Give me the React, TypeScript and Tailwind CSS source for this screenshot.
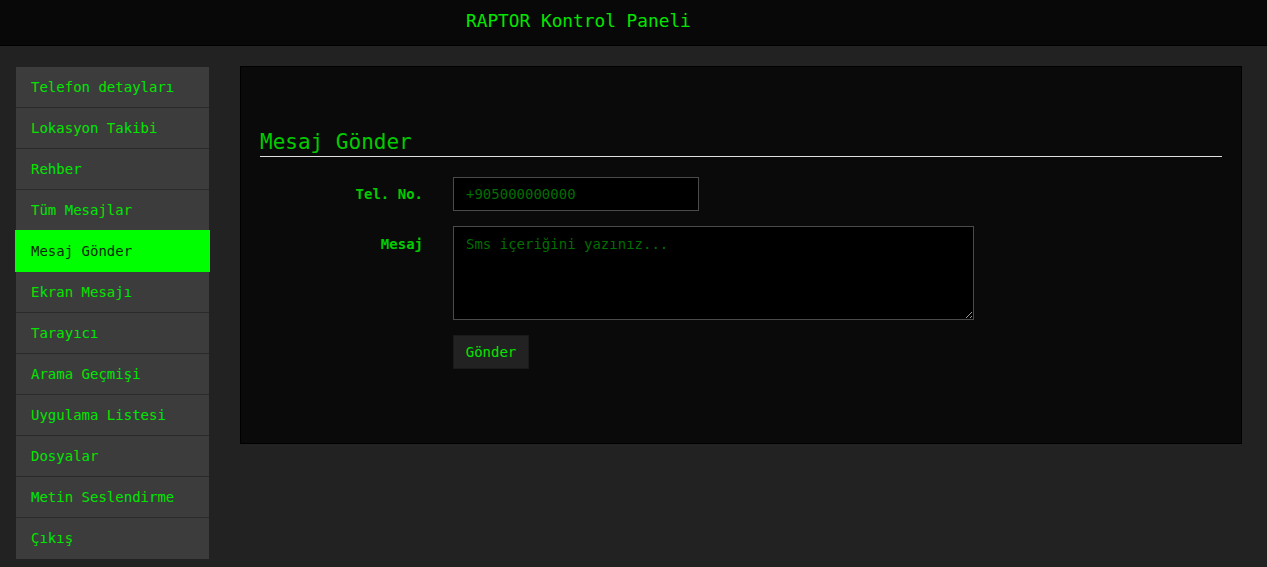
import React from 'react';

const menu = [
  'Telefon detayları',
  'Lokasyon Takibi',
  'Rehber',
  'Tüm Mesajlar',
  'Mesaj Gönder',
  'Ekran Mesajı',
  'Tarayıcı',
  'Arama Geçmişi',
  'Uygulama Listesi',
  'Dosyalar',
  'Metin Seslendirme',
  'Çıkış',
];

const App: React.FC = () => {
  return (
    <div className="min-h-screen bg-[#222222] font-['DejaVu_Sans_Mono',monospace] text-[#00e600]">
      <header className="h-[46px] bg-[#080808] border-b border-black flex items-center">
        <h1 className="pl-[466px] text-[17.8px] text-[#00e600] leading-none pb-[4px]">RAPTOR Kontrol Paneli</h1>
      </header>

      <div className="flex items-start pl-[16px] pr-[25px] pt-[20px] gap-[31px]">
        <nav className="w-[193px] shrink-0 flex flex-col mt-[1px]">
          {menu.map((item, i) => {
            const active = item === 'Mesaj Gönder';
            const last = i === menu.length - 1;
            return (
              <a
                key={item}
                href="#"
                className={
                  active
                    ? 'relative h-[42px] -mt-px -mx-px flex items-center pl-[16px] bg-[#00ff00] text-[#0a2a0a] text-[14px]'
                    : `h-[41px] flex items-center pl-[15px] bg-[#3c3c3c] text-[#00e600] text-[14px] ${last ? 'h-[40px]' : 'border-b border-[#2a2a2a]'}`
                }
              >
                {item}
              </a>
            );
          })}
        </nav>

        <main className="flex-1 bg-[#0a0a0a] border border-black h-[378px] px-[19px] pt-[63px]">
          <h2 className="text-[21px] text-[#00cc00] leading-[25px] pb-px border-b border-[#e0e0e0]">Mesaj Gönder</h2>

          <form className="mt-[20px] flex flex-col gap-[15px]" onSubmit={(e) => e.preventDefault()}>
            <div className="flex items-center gap-[30px]">
              <label className="w-[163px] text-right text-[14px] font-bold text-[#00cc00]">Tel. No.</label>
              <input
                type="text"
                placeholder="+905000000000"
                className="w-[246px] h-[34px] bg-black border border-[#4a4a4a] px-[12px] text-[14px] text-[#00cc00] placeholder:text-[#006e00] outline-none"
              />
            </div>
            <div className="flex items-start gap-[30px]">
              <label className="w-[163px] text-right text-[14px] font-bold text-[#00cc00] pt-[8px]">Mesaj</label>
              <textarea
                placeholder="Sms içeriğini yazınız..."
                className="w-[521px] h-[94px] bg-black border border-[#4a4a4a] px-[12px] py-[7px] text-[14px] text-[#00cc00] placeholder:text-[#006e00] outline-none"
              />
            </div>
            <div className="flex gap-[30px]">
              <div className="w-[163px]" />
              <button type="submit" className="h-[34px] w-[76px] bg-[#222222] border border-[#1a1a1a] text-[14px] text-[#00e600]">
                Gönder
              </button>
            </div>
          </form>
        </main>
      </div>
    </div>
  );
};

export default App;
